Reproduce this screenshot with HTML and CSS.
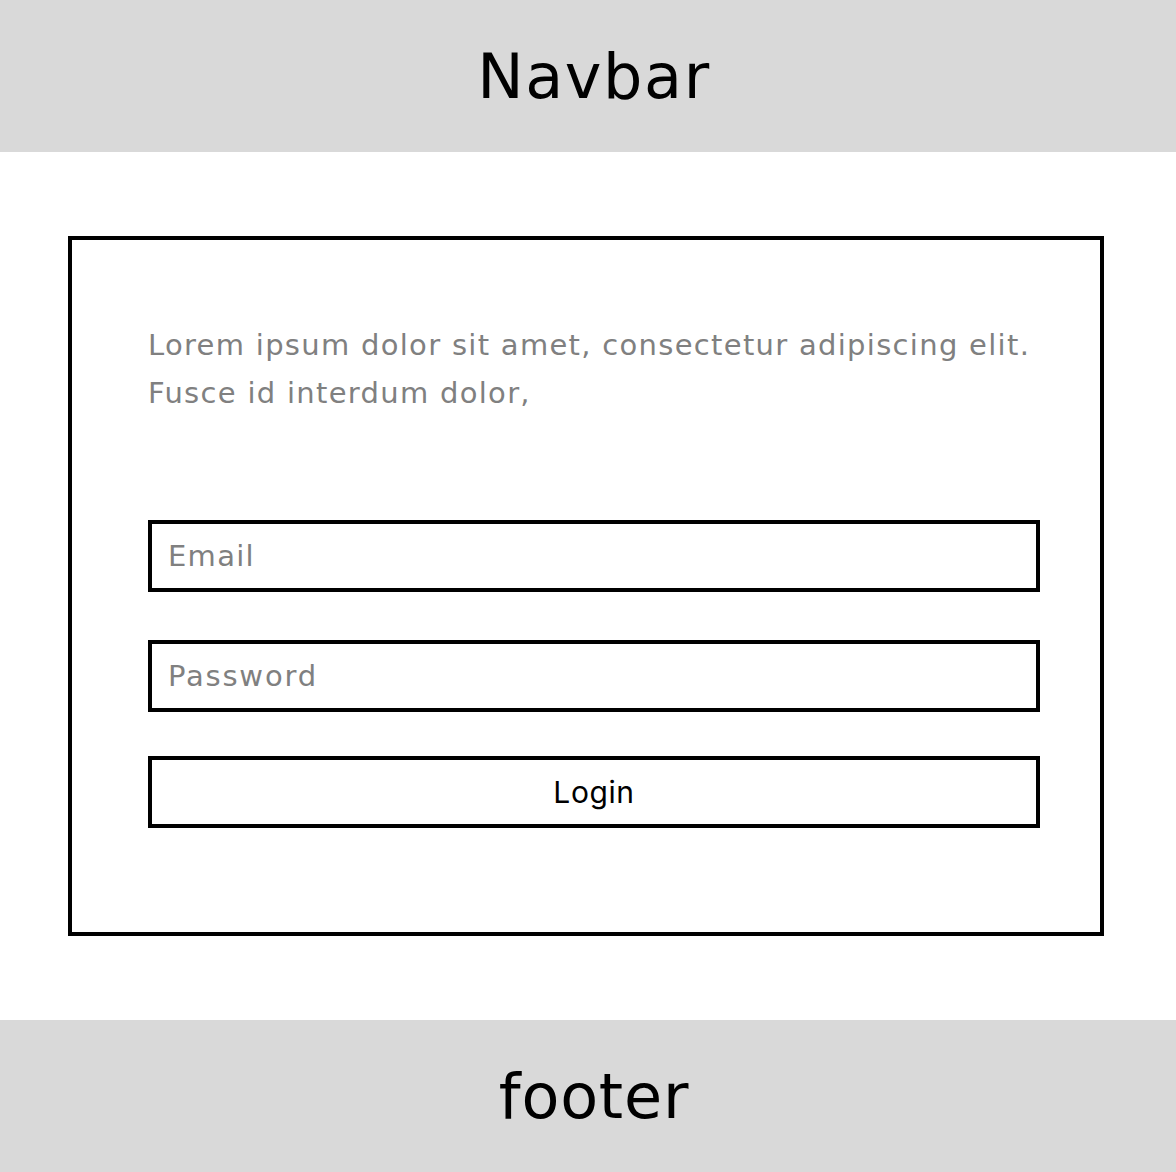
FILE: index.html
```html
<!DOCTYPE html>
<html lang="en">
<head>
<meta charset="utf-8">
<title>Login</title>
<link rel="stylesheet" href="styles.css">
</head>
<body>
<header class="navbar">Navbar</header>
<main class="main">
  <section class="card">
    <p class="intro">Lorem ipsum dolor sit amet, consectetur adipiscing elit.<br>Fusce id interdum dolor,</p>
    <form class="form">
      <input class="field field-email" type="email" placeholder="Email">
      <input class="field field-password" type="password" placeholder="Password">
      <button class="btn" type="button">Login</button>
    </form>
  </section>
</main>
<footer class="footer">footer</footer>
</body>
</html>
```
FILE: styles.css
```css
* { box-sizing: border-box; }
html, body { margin: 0; padding: 0; background: #fff; }
body { font-family: "DejaVu Sans", "Open Sans", sans-serif; color: #000; }
.navbar, .footer {
  height: 152px;
  background: #d9d9d9;
  display: flex;
  align-items: center;
  justify-content: center;
  padding-left: 12px;
  font-size: 62px;
  font-weight: 400;
}
.navbar { letter-spacing: 1.6px; }
.footer { letter-spacing: 0.8px; }
.main { padding: 84px 72px 84px 68px; }
.card {
  width: 1036px;
  height: 700px;
  border: 4px solid #000;
  padding: 81px 0 0 76px;
}
.intro {
  margin: 0;
  font-size: 29px;
  line-height: 48px;
  letter-spacing: 1.3px;
  color: #808080;
}
.form {
  margin-top: 103px;
  display: flex;
  flex-direction: column;
  width: 892px;
}
.field {
  height: 72px;
  border: 4px solid #000;
  padding: 0 16px;
  font-family: inherit;
  font-size: 29px;
  letter-spacing: 1.3px;
  outline: none;
}
.field::placeholder { color: #808080; }
.field-password { margin-top: 48px; letter-spacing: 1.8px; }
.btn {
  margin-top: 44px;
  height: 72px;
  border: 4px solid #000;
  background: #fff;
  font-family: Inter, sans-serif;
  font-size: 30px;
  letter-spacing: 0.6px;
  color: #000;
}
```
